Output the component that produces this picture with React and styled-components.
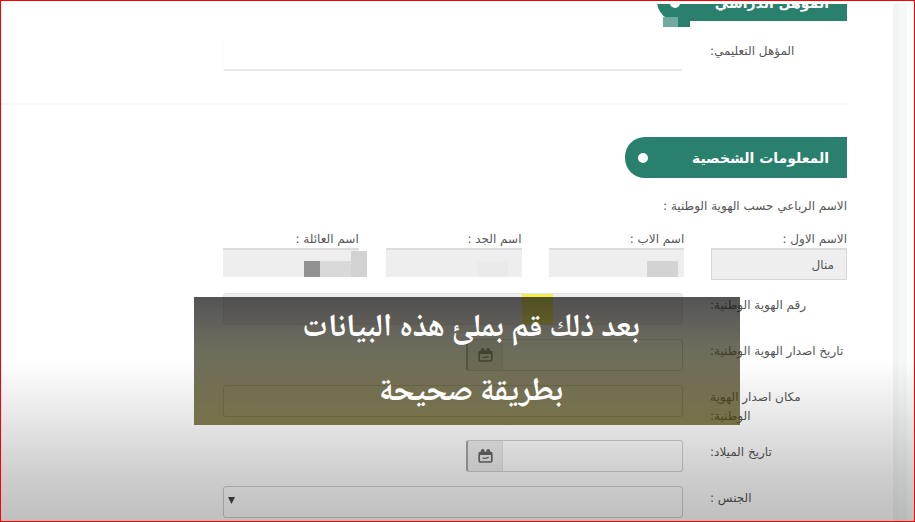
import React from 'react';
import styled, { createGlobalStyle } from 'styled-components';

const GlobalStyle = createGlobalStyle`
    * {
        box-sizing: border-box;
    }
    body {
        margin: 0;
        background: #fff;
        font-family: "DejaVu Sans", sans-serif;
        color: #555;
    }
    input, select, button {
        font: inherit;
        color: inherit;
    }
`;

const Frame = styled.div`
    position: relative;
    height: 100vh;
    padding-top: 3px;
    border: 1px solid #f00;
    overflow: hidden;
`;

const Page = styled.div`
    display: flex;
    height: 100%;
    overflow: hidden;
`;

const PageEdge = styled.div`
    flex: none;
    width: 21px;
    border-right: 7px solid #fdfdfd;
    background: linear-gradient(to right, #f2f3f3 5px, #f6f7f7 5px);
`;

const Form = styled.form`
    flex: 1;
    min-width: 0;
    padding-right: 46px;
`;

const Banner = styled.h2`
    position: relative;
    display: flex;
    align-items: center;
    justify-content: space-between;
    width: ${(props) => (props.$short ? 190 : 222)}px;
    height: 41px;
    margin: ${(props) => (props.$short ? '-24px' : '32px')} 0 0;
    padding: ${(props) => (props.$short ? 4 : 0)}px 18px 0 13px;
    border-radius: 20px 0 0 20px;
    background: #28806d;
    color: #fff;
    font-size: 14px;
    line-height: 20px;
`;

const Dot = styled.span`
    width: 10px;
    height: 10px;
    border-radius: 50%;
    background: #fff;
`;

const BannerMosaic = styled.span`
    position: absolute;
    left: 6px;
    top: 37px;
    width: 27px;
    height: 10px;
    background: linear-gradient(to right, #6faa9c 15px, #28806d 15px);
`;

const Divider = styled.hr`
    height: 2px;
    margin: 32px 0 0;
    border: 0;
    background: #f8f8f8;
`;

const Intro = styled.p`
    margin: 18px 0 14px;
    font-size: 12px;
    line-height: 20px;
`;

const Names = styled.div`
    display: grid;
    grid-template-columns: repeat(4, 1fr);
    gap: 27px;
    padding-left: 222px;
    margin-bottom: 13px;
`;

const NameField = styled.div`
    position: relative;
    display: flex;
    flex-direction: column;
`;

const NameLabel = styled.label`
    font-size: 12px;
    line-height: 18px;
    white-space: nowrap;
`;

const NameInput = styled.input`
    width: 100%;
    height: ${(props) => (props.$masked ? 29 : 32)}px;
    padding: 0 12px;
    border: ${(props) => (props.$masked ? '0' : '1px')} solid #d6d6d6;
    border-top: 2px solid #dcdcdc;
    background: #eee;
    font-size: 12px;
`;

// blocks that hide the personal part of a value
const Mosaic = styled.span`
    position: absolute;
    left: ${(props) => props.$left}px;
    bottom: 3px;
    width: ${(props) => props.$width}px;
    height: ${(props) => props.$height || 16}px;
    background: ${(props) => props.$color};
`;

const Rows = styled.div`
    display: flex;
    flex-direction: column;
    gap: 14px;
`;

const Row = styled.div`
    display: grid;
    grid-template-columns: 137px 1fr;
    column-gap: 27px;
    align-items: start;
    padding-left: 222px;
    margin-top: ${(props) => props.$top || 0}px;
`;

const Label = styled.label`
    padding-top: 3px;
    font-size: 12px;
    line-height: 19px;
    text-align: left;
`;

const TextInput = styled.input`
    width: 100%;
    height: 32px;
    padding: 0 12px;
    border: 1px solid #cfcfcf;
    border-radius: 3px;
    background: #fff;
    font-size: 12px;
`;

const PlainInput = styled(TextInput)`
    border-width: 0 1px 2px;
    border-color: transparent #fcfcfc #e9e9e9;
`;

const IdInput = styled(TextInput)`
    border-color: #e2e2e2;
    background: linear-gradient(to right, #eee 299px, #f2ee4e 299px, #f2ee4e 330px, #eee 330px);
    background-origin: border-box;
`;

const DateGroup = styled.div`
    display: flex;
    justify-self: start;
    width: 217px;
`;

const DateInput = styled(TextInput)`
    flex: 1;
    min-width: 0;
    border-left: 0;
    border-radius: 0 3px 3px 0;
`;

const DateButton = styled.button`
    display: flex;
    align-items: center;
    justify-content: center;
    width: 37px;
    height: 32px;
    padding: 0;
    border: 1px solid #cfcfcf;
    border-left: 2px solid #a5a5a5;
    border-right-color: #e2e2e2;
    border-radius: 3px 0 0 3px;
    background: #eee;
    color: #666;
`;

const SelectBox = styled.div`
    display: grid;
    align-items: center;
`;

const Select = styled.select`
    grid-area: 1 / 1;
    width: 100%;
    height: 32px;
    border: 1px solid #cfcfcf;
    border-radius: 3px;
    background: #fff;
    appearance: none;
`;

const Arrow = styled.svg`
    grid-area: 1 / 1;
    justify-self: end;
    margin-left: 5px;
    margin-bottom: 3px;
    pointer-events: none;
`;

const Shade = styled.div`
    position: absolute;
    left: 0;
    right: 0;
    bottom: 0;
    height: 162px;
    background: linear-gradient(to bottom, rgba(0, 0, 0, 0), rgba(0, 0, 0, .09) 35%, rgba(0, 0, 0, .19) 70%, rgba(0, 0, 0, .25));
    pointer-events: none;
`;

const Caption = styled.p`
    position: absolute;
    top: 296px;
    left: 193px;
    right: 174px;
    margin: 0;
    padding: 0 76px 0 84px;
    background: linear-gradient(to bottom, rgba(18, 18, 20, .72), rgba(50, 48, 30, .72) 35%, rgba(77, 69, 12, .72));
    color: #fff;
    font-family: "Noto Naskh Arabic", "Amiri", "Scheherazade New", "DejaVu Sans", serif;
    font-size: 32px;
    font-weight: bold;
    line-height: 64px;
    text-align: center;
    white-space: nowrap;
    pointer-events: none;
`;

const CalendarIcon = () => (
    <svg width="15" height="14" viewBox="0 0 15 14" fill="none" aria-hidden="true">
        <rect x="1.2" y="3.6" width="12.6" height="9.4" rx="1.2" stroke="currentColor" strokeWidth="1.7" />
        <path d="M1 3h13v3H1z" fill="currentColor" />
        <path d="M4.7 2v1.6M10.2 2v1.6" stroke="currentColor" strokeWidth="3.8" strokeLinecap="round" />
        <path d="M4.5 9.2l3 .2 3.2-1" stroke="currentColor" strokeWidth="1.2" />
    </svg>
);

const DateField = ({ id }) => (
    <DateGroup>
        <DateInput id={id} type="text" />
        <DateButton type="button" aria-label="التقويم">
            <CalendarIcon />
        </DateButton>
    </DateGroup>
);

const App = () => {
    return (
        <>
        <GlobalStyle />
        <Frame dir="rtl" lang="ar">
            <Page>
                <PageEdge />
                <Form>
                    <Banner $short>
                        المؤهل الدراسي
                        <Dot />
                        <BannerMosaic />
                    </Banner>
                    <Row $top={18}>
                        <Label htmlFor="education">المؤهل التعليمي:</Label>
                        <PlainInput id="education" type="text" />
                    </Row>
                    <Divider />

                    <Banner>
                        المعلومات الشخصية
                        <Dot />
                    </Banner>
                    <Intro>الاسم الرباعي حسب الهوية الوطنية :</Intro>
                    <Names>
                        <NameField>
                            <NameLabel htmlFor="first">الاسم الاول :</NameLabel>
                            <NameInput id="first" type="text" defaultValue="منال" />
                        </NameField>
                        <NameField>
                            <NameLabel htmlFor="father">اسم الاب :</NameLabel>
                            <NameInput id="father" type="text" $masked />
                            <Mosaic $left={98} $width={31} $color="#d3d3d3" />
                        </NameField>
                        <NameField>
                            <NameLabel htmlFor="grandfather">اسم الجد :</NameLabel>
                            <NameInput id="grandfather" type="text" $masked />
                            <Mosaic $left={92} $width={30} $color="#eaeaea" />
                        </NameField>
                        <NameField>
                            <NameLabel htmlFor="family">اسم العائلة :</NameLabel>
                            <NameInput id="family" type="text" $masked />
                            <Mosaic $left={81} $width={16} $color="#929292" />
                            <Mosaic $left={97} $width={31} $color="#d9d9d9" />
                            <Mosaic $left={128} $width={16} $height={26} $color="#d2d2d2" />
                        </NameField>
                    </Names>

                    <Rows>
                        <Row>
                            <Label htmlFor="national-id">رقم الهوية الوطنية:</Label>
                            <IdInput id="national-id" type="text" />
                        </Row>
                        <Row>
                            <Label htmlFor="issue-date">تاريخ اصدار الهوية الوطنية:</Label>
                            <DateField id="issue-date" />
                        </Row>
                        <Row>
                            <Label htmlFor="issue-place">مكان اصدار الهوية<br />الوطنية:</Label>
                            <TextInput id="issue-place" type="text" />
                        </Row>
                        <Row>
                            <Label htmlFor="birth-date">تاريخ الميلاد:</Label>
                            <DateField id="birth-date" />
                        </Row>
                        <Row>
                            <Label htmlFor="gender">الجنس :</Label>
                            <SelectBox>
                                <Select id="gender" />
                                <Arrow width="7" height="7" viewBox="0 0 7 7" aria-hidden="true">
                                    <path d="M0 0h7L3.5 7z" fill="#444" />
                                </Arrow>
                            </SelectBox>
                        </Row>
                    </Rows>
                </Form>
            </Page>
            <Shade />
            <Caption>بعد ذلك قم بملئ هذه البيانات<br />بطريقة صحيحة</Caption>
        </Frame>
        </>
    )
}

export default App;
